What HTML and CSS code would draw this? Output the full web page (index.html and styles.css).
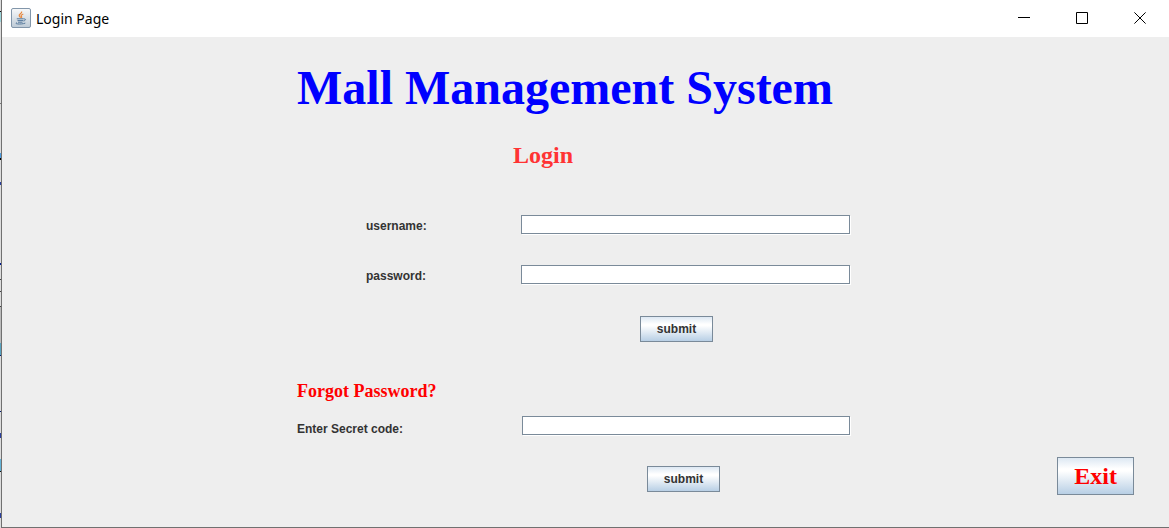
FILE: index.html
```html
<!DOCTYPE html>
<html lang="en">
<head>
<meta charset="utf-8">
<meta name="viewport" content="width=device-width, initial-scale=1">
<title>Login Page</title>
<link rel="stylesheet" href="styles.css">
</head>
<body>
<div class="backdrop"></div>
<div class="window">
  <header class="titlebar">
    <svg class="app-icon" width="20" height="20" viewBox="0 0 20 20" aria-hidden="true">
      <defs><linearGradient id="tile" x1="0" y1="0" x2="0" y2="1"><stop offset="0" stop-color="#f8f9fa"/><stop offset="1" stop-color="#bdcad6"/></linearGradient></defs>
      <rect x=".5" y=".5" width="19" height="19" rx="1.5" fill="url(#tile)" stroke="#8296aa"/>
      <path d="M10.600 3.500c.8 1.800-3 2.700-2.400 4.300.3.800 1.200 1.200 1.300 2M12.300 6c-1.700.7-2.700 1.500-1.900 2.400.5.600.3 1-.2 1.400" fill="none" stroke="#e8853a" stroke-width="1.200"/>
      <path d="M5.800 10.800h7M13 11c2.200-.5 2 1.600-.6 2M6.500 12.600h5.700M7 14.200h4.500M5.800 14.600c-3.500 1.500 4.900 2 8.500.5" fill="none" stroke="#54789b" stroke-width="1"/>
    </svg>
    <span class="caption">Login Page</span>
    <div class="controls">
      <button class="control" type="button" aria-label="Minimize"><svg width="12" height="12" viewBox="0 0 12 12"><path d="M0 5.500h12"/></svg></button>
      <button class="control" type="button" aria-label="Maximize"><svg width="12" height="12" viewBox="0 0 12 12"><path d="M.5.5h11v11H.5z"/></svg></button>
      <button class="control" type="button" aria-label="Close"><svg width="12" height="12" viewBox="0 0 12 12"><path d="M.4.4l11.200 11.200M11.600.4L.4 11.600"/></svg></button>
    </div>
  </header>
  <main class="content">
    <div class="panel">
      <h1 class="title">Mall Management System</h1>
      <h2 class="subtitle">Login</h2>
      <form class="form login">
        <label class="label indented" for="username">username:</label>
        <input class="field" id="username" type="text">
        <label class="label indented" for="password">password:</label>
        <input class="field" id="password" type="password">
        <button class="button submit" type="button">submit</button>
      </form>
      <h3 class="forgot">Forgot Password?</h3>
      <form class="form recovery">
        <label class="label" for="secret">Enter Secret code:</label>
        <input class="field" id="secret" type="text">
        <button class="button submit" type="button">submit</button>
      </form>
    </div>
    <button class="button exit" type="button">Exit</button>
  </main>
</div>
</body>
</html>
```
FILE: styles.css
```css
* {
  box-sizing: border-box;
}

body {
  display: flex;
  min-height: 100vh;
  margin: 0;
  background: #ededed;
  font-family: "Liberation Sans", Arial, sans-serif;
}

h1, h2, h3 {
  margin: 0;
  font-family: "Liberation Serif", "Times New Roman", serif;
  font-weight: bold;
}

/* Sliver of the desktop behind the window */
.backdrop {
  flex: 0 0 1px;
  background: linear-gradient(
    #dcdcdc 11px, #111 11px 12px, #9fd5da 12px 22px, #dcdcdc 22px 103px,
    #777 103px 104px, #dcdcdc 104px 153px, #4a9be0 153px 158px, #000 158px 160px,
    #dcdcdc 160px 182px, #2a3f9e 182px 185px, #dcdcdc 185px 263px, #001a90 263px 265px,
    #dcdcdc 265px 279px, #444 279px 280px, #dcdcdc 280px 291px, #444 291px 292px,
    #dcdcdc 292px 306px, #444 306px 307px, #bbb 307px 343px, #58a3c0 343px 355px,
    #001a70 355px 356px, #dcdcdc 356px 411px, #001a70 411px 412px, #dcdcdc 412px 433px,
    #2a3f9e 433px 438px, #dcdcdc 438px 459px, #64b4d8 459px 471px, #111 471px 472px,
    #dcdcdc 472px 513px, #2a3f9e 513px 518px, #dcdcdc 518px);
}

.window {
  display: flex;
  flex: 1;
  flex-direction: column;
  min-width: 0;
  border-left: 1px solid #707070;
  border-bottom: 1px solid #707070;
  background: #eee;
}

.titlebar {
  display: flex;
  align-items: center;
  height: 37px;
  padding-left: 9px;
  background: #fff;
}

.app-icon {
  flex: none;
  margin-bottom: 2px;
}

.caption {
  margin-left: 5px;
  font: 14px/20px "Noto Sans", "Open Sans", sans-serif;
  color: #000;
}

.controls {
  display: flex;
  align-self: stretch;
  margin-left: auto;
}

.control {
  display: flex;
  align-items: center;
  justify-content: center;
  width: 58px;
  padding: 0 0 1px;
  border: 0;
  background: none;
}

.control svg {
  fill: none;
  stroke: #000;
}

.content {
  display: grid;
  flex: 1;
  grid-template-columns: minmax(16px, 295fr) 553px minmax(120px, 319fr);
  background: #eee;
}

.panel {
  grid-column: 2;
  padding: 23px 0 32px;
}

.title {
  font-size: 48px;
  line-height: 56px;
  color: #00f;
}

.subtitle {
  margin-top: 25px;
  padding-left: 216px;
  font-size: 24px;
  line-height: 28px;
  color: #f33;
}

.form {
  display: grid;
  row-gap: 30px;
}

.login {
  grid-template-columns: 224px 1fr;
  margin-top: 46px;
}

.recovery {
  grid-template-columns: 225px 1fr;
  margin-top: 15px;
}

.label {
  padding-top: 2px;
  font-size: 12px;
  font-weight: bold;
  line-height: 18px;
  color: #333;
}

.indented {
  padding-left: 69px;
}

.recovery .label {
  padding-top: 4px;
}

.field {
  width: 100%;
  height: 19px;
  padding: 0 3px;
  border: 1px solid #7a8a99;
  border-radius: 0;
  outline: 0;
  background: #fff;
  box-shadow: 1px 1px #fff;
  font: 12px "Liberation Sans", Arial, sans-serif;
  color: #333;
}

.button {
  border: 1px solid #7a8a99;
  border-radius: 0;
  background: linear-gradient(#dde8f3, #fff 30%, #fff 36%, #b8cfe5);
  color: #333;
}

.submit {
  grid-column: 2;
  width: 73px;
  height: 26px;
  padding: 0;
  font: bold 12px "Liberation Sans", Arial, sans-serif;
}

.login .submit {
  margin: 1px 0 0 119px;
}

.recovery .submit {
  margin: -2px 0 0 125px;
}

.forgot {
  margin-top: 39px;
  font-size: 18px;
  line-height: 20px;
  color: #f00;
}

.exit {
  grid-column: 3;
  place-self: end;
  margin: 0 35px 32px 0;
  padding: 4px 16px;
  font: bold 24px/28px "Liberation Serif", "Times New Roman", serif;
  color: #f00;
}
```
